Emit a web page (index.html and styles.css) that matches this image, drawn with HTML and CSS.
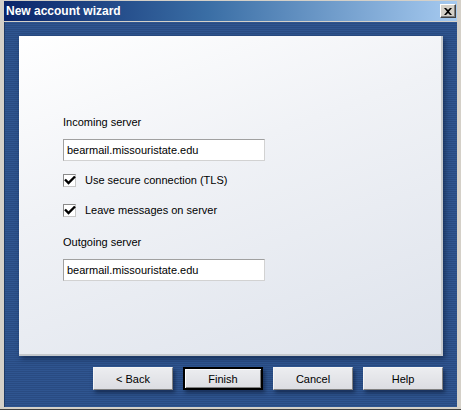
FILE: index.html
```html
<!DOCTYPE html>
<html>
<head>
<meta charset="utf-8">
<link rel="stylesheet" href="styles.css">
</head>
<body>
<div class="window">
  <div class="titlebar">
    <span class="title">New account wizard</span>
    <span class="close-btn"><svg width="8" height="7" viewBox="0 0 8 7"><path d="M0 0h2l2 2 2-2h2L5 3.5 8 7H6L4 5 2 7H0l3-3.5z" fill="#000"/></svg></span>
  </div>
  <div class="client">
    <div class="panel">
      <div class="field-label first">Incoming server</div>
      <div class="textbox">bearmail.missouristate.edu</div>
      <div class="check-row first-check">
        <span class="checkbox"><svg width="13" height="13" viewBox="0 0 13 13"><path d="M2 5.5L5.5 9L12 2.5" fill="none" stroke="#000" stroke-width="2.4"/></svg></span>
        <span class="check-label">Use secure connection (TLS)</span>
      </div>
      <div class="check-row second-check">
        <span class="checkbox"><svg width="13" height="13" viewBox="0 0 13 13"><path d="M2 5.5L5.5 9L12 2.5" fill="none" stroke="#000" stroke-width="2.4"/></svg></span>
        <span class="check-label">Leave messages on server</span>
      </div>
      <div class="field-label second">Outgoing server</div>
      <div class="textbox">bearmail.missouristate.edu</div>
    </div>
    <div class="buttons">
      <div class="btn">&lt; Back</div>
      <div class="btn default">Finish</div>
      <div class="btn">Cancel</div>
      <div class="btn">Help</div>
    </div>
  </div>
</div>
</body>
</html>
```
FILE: styles.css
```css
html, body {
  margin: 0;
  padding: 0;
  background: #d4d0c8;
}
body {
  font-family: "Liberation Sans", Arial, sans-serif;
  font-size: 11px;
  color: #000;
}
.window {
  width: 461px;
  height: 410px;
  box-sizing: border-box;
  background: #d4d0c8;
  padding: 1px 4px 2px 4px;
  display: flex;
  flex-direction: column;
  border-bottom: 1px solid #404040;
}
.titlebar {
  height: 20px;
  flex: none;
  background: linear-gradient(to right, #0a246a 0%, #3a6ea5 45%, #a6caf0 100%);
  display: flex;
  align-items: center;
  justify-content: space-between;
  padding: 0 1px 0 2px;
}
.title {
  color: #fff;
  font-family: "Liberation Sans", Arial, sans-serif;
  font-weight: bold;
  font-size: 12px;
}
.close-btn {
  width: 16px;
  height: 14px;
  box-sizing: border-box;
  background: #d4d0c8;
  border: 1px solid;
  border-color: #fff #404040 #404040 #fff;
  box-shadow: inset -1px -1px 0 #808080;
  display: flex;
  align-items: center;
  justify-content: center;
}
.client {
  flex: 1;
  margin-top: 1px;
  background-color: #2d528c;
  background-image: repeating-linear-gradient(to bottom, #2f5590 0px, #2f5590 1px, #294b82 1px, #294b82 2px);
  border-left: 1px solid #1e3a66;
  padding: 14px 13px 0 14px;
  display: flex;
  flex-direction: column;
}
.panel {
  width: 424px;
  height: 320px;
  box-sizing: border-box;
  background: linear-gradient(160deg, #ffffff 0%, #f0f2f6 40%, #dee3ec 100%);
  border-right: 2px solid #c4c8cc;
  border-bottom: 2px solid #c4c8cc;
  box-shadow: 2px 3px 5px rgba(10, 25, 55, 0.55);
  padding: 79px 0 0 44px;
}
.field-label {
  line-height: 14px;
  height: 14px;
  font-size: 11px;
}
.field-label.second {
  margin-top: 18px;
}
.textbox {
  margin-top: 10px;
  width: 202px;
  height: 22px;
  box-sizing: border-box;
  background: #fff;
  border: 1px solid;
  border-color: #a0a0a0 #d2d2d2 #d2d2d2 #a0a0a0;
  padding-left: 3px;
  line-height: 20px;
  font-size: 11px;
}
.check-row {
  display: flex;
  align-items: center;
  height: 13px;
}
.first-check { margin-top: 13px; }
.second-check { margin-top: 17px; }
.checkbox {
  width: 13px;
  height: 13px;
  box-sizing: border-box;
  background: #fff;
  border: 1px solid;
  border-color: #8a8a8a #c8c8c8 #c8c8c8 #8a8a8a;
  position: relative;
  flex: none;
}
.checkbox svg {
  position: absolute;
  left: -1px;
  top: -1px;
  overflow: visible;
}
.check-label {
  margin-left: 9px;
  font-size: 11px;
  line-height: 13px;
}
.buttons {
  margin-top: 11px;
  display: flex;
  justify-content: flex-end;
  gap: 10px;
  width: 424px;
}
.btn {
  width: 80px;
  height: 23px;
  box-sizing: border-box;
  background: linear-gradient(to bottom, #ecedf0 0%, #dcdde2 100%);
  border: 1px solid;
  border-color: #f4f4f4 #808080 #808080 #f4f4f4;
  box-shadow: 2px 3px 4px rgba(8, 20, 45, 0.55);
  display: flex;
  align-items: center;
  justify-content: center;
  font-size: 11px;
}
.btn.default {
  border: 2px solid #000;
  box-shadow: inset 1px 1px 0 #fff, inset -1px -1px 0 #808080, 2px 3px 4px rgba(8, 20, 45, 0.55);
}
```
